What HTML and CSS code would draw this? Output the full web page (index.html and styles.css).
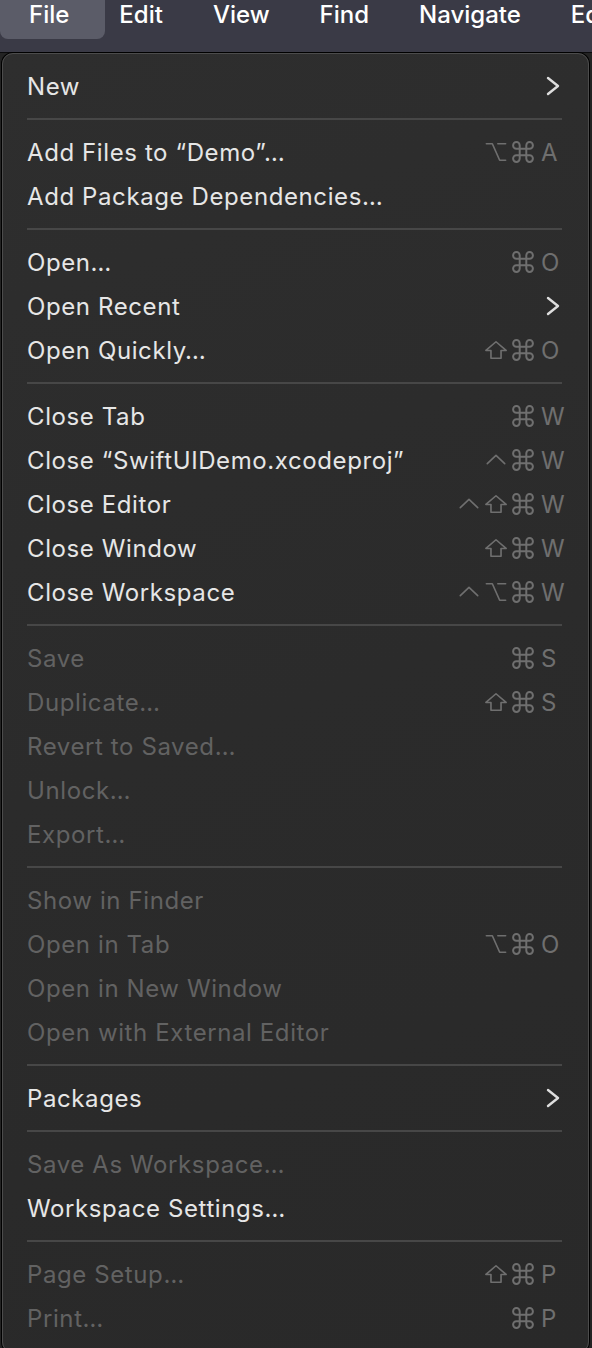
FILE: index.html
```html
<!DOCTYPE html>
<html lang="en">
<head>
<meta charset="utf-8">
<title>Xcode File menu</title>
<link rel="stylesheet" href="styles.css">
</head>
<body>
<svg width="0" height="0" class="defs" aria-hidden="true">
  <defs>
    <symbol id="cmd" viewBox="2 2 20 20"><path d="M15 6v12a3 3 0 1 0 3-3H6a3 3 0 1 0 3 3V6a3 3 0 1 0-3 3h12a3 3 0 1 0-3-3"/></symbol>
    <symbol id="shift" viewBox="0 0 24 24"><path d="M12 3 L23 12.5 H17.5 V21 H6.5 V12.5 H1 Z"/></symbol>
    <symbol id="ctrl" viewBox="0 0 24 24"><path d="M2.5 16 L12 7 L21.5 16"/></symbol>
    <symbol id="opt" viewBox="0 0 24 24"><path d="M1.5 3 H8 L16 21 H22.5 M14 3 H22.5"/></symbol>
    <symbol id="chev" viewBox="0 0 16 20"><path d="M2 2 L12 10 L2 18"/></symbol>
  </defs>
</svg>

<header class="menubar">
  <div class="mb-item active">File</div>
  <div class="mb-item">Edit</div>
  <div class="mb-item">View</div>
  <div class="mb-item">Find</div>
  <div class="mb-item">Navigate</div>
  <div class="mb-item">Editor</div>
</header>

<nav class="menu">
  <div class="item"><span class="label">New</span><svg class="chev"><use href="#chev"/></svg></div>
  <div class="sep"></div>
  <div class="item"><span class="label">Add Files to “Demo”…</span>
    <span class="keys"><span class="k"></span><svg class="k"><use href="#opt"/></svg><svg class="k"><use href="#cmd"/></svg><span class="key">A</span></span></div>
  <div class="item"><span class="label">Add Package Dependencies…</span></div>
  <div class="sep"></div>
  <div class="item"><span class="label">Open…</span>
    <span class="keys"><span class="k"></span><span class="k"></span><svg class="k"><use href="#cmd"/></svg><span class="key">O</span></span></div>
  <div class="item"><span class="label">Open Recent</span><svg class="chev"><use href="#chev"/></svg></div>
  <div class="item"><span class="label">Open Quickly…</span>
    <span class="keys"><span class="k"></span><svg class="k"><use href="#shift"/></svg><svg class="k"><use href="#cmd"/></svg><span class="key">O</span></span></div>
  <div class="sep"></div>
  <div class="item"><span class="label">Close Tab</span>
    <span class="keys"><span class="k"></span><span class="k"></span><svg class="k"><use href="#cmd"/></svg><span class="key">W</span></span></div>
  <div class="item"><span class="label">Close “SwiftUIDemo.xcodeproj”</span>
    <span class="keys"><span class="k"></span><svg class="k"><use href="#ctrl"/></svg><svg class="k"><use href="#cmd"/></svg><span class="key">W</span></span></div>
  <div class="item"><span class="label">Close Editor</span>
    <span class="keys"><svg class="k"><use href="#ctrl"/></svg><svg class="k"><use href="#shift"/></svg><svg class="k"><use href="#cmd"/></svg><span class="key">W</span></span></div>
  <div class="item"><span class="label">Close Window</span>
    <span class="keys"><span class="k"></span><svg class="k"><use href="#shift"/></svg><svg class="k"><use href="#cmd"/></svg><span class="key">W</span></span></div>
  <div class="item"><span class="label">Close Workspace</span>
    <span class="keys"><svg class="k"><use href="#ctrl"/></svg><svg class="k"><use href="#opt"/></svg><svg class="k"><use href="#cmd"/></svg><span class="key">W</span></span></div>
  <div class="sep"></div>
  <div class="item off"><span class="label">Save</span>
    <span class="keys"><span class="k"></span><span class="k"></span><svg class="k"><use href="#cmd"/></svg><span class="key">S</span></span></div>
  <div class="item off"><span class="label">Duplicate…</span>
    <span class="keys"><span class="k"></span><svg class="k"><use href="#shift"/></svg><svg class="k"><use href="#cmd"/></svg><span class="key">S</span></span></div>
  <div class="item off"><span class="label">Revert to Saved…</span></div>
  <div class="item off"><span class="label">Unlock…</span></div>
  <div class="item off"><span class="label">Export…</span></div>
  <div class="sep"></div>
  <div class="item off"><span class="label">Show in Finder</span></div>
  <div class="item off"><span class="label">Open in Tab</span>
    <span class="keys"><span class="k"></span><svg class="k"><use href="#opt"/></svg><svg class="k"><use href="#cmd"/></svg><span class="key">O</span></span></div>
  <div class="item off"><span class="label">Open in New Window</span></div>
  <div class="item off"><span class="label">Open with External Editor</span></div>
  <div class="sep"></div>
  <div class="item"><span class="label">Packages</span><svg class="chev"><use href="#chev"/></svg></div>
  <div class="sep"></div>
  <div class="item off"><span class="label">Save As Workspace…</span></div>
  <div class="item"><span class="label">Workspace Settings…</span></div>
  <div class="sep"></div>
  <div class="item off"><span class="label">Page Setup…</span>
    <span class="keys"><span class="k"></span><svg class="k"><use href="#shift"/></svg><svg class="k"><use href="#cmd"/></svg><span class="key">P</span></span></div>
  <div class="item off"><span class="label">Print…</span>
    <span class="keys"><span class="k"></span><span class="k"></span><svg class="k"><use href="#cmd"/></svg><span class="key">P</span></span></div>
</nav>
</body>
</html>
```

FILE: styles.css
```css
* { box-sizing: border-box; }

html, body {
  margin: 0;
  padding: 0;
  background: #232323;
  overflow: hidden;
}

body {
  font-family: Inter, "Liberation Sans", sans-serif;
  width: 592px;
  height: 1348px;
}

.defs {
  position: absolute;
  width: 0;
  height: 0;
}

.menubar {
  height: 53px;
  background: #3a3a46;
  border-bottom: 1px solid #0b0b0d;
  display: flex;
  align-items: flex-start;
  gap: 50px;
  padding-left: 29px;
  white-space: nowrap;
  overflow: hidden;
}

.mb-item {
  color: #ffffff;
  font-size: 24px;
  font-weight: 500;
  line-height: 30px;
  position: relative;
  z-index: 0;
}

.mb-item.active::before {
  content: "";
  position: absolute;
  left: -29px;
  right: -36px;
  top: -10px;
  height: 49px;
  background: #5b5c68;
  border-radius: 8px;
  z-index: -1;
}

.menu {
  margin: 0 3px 0 2px;
  height: 1300px;
  background: linear-gradient(160deg, #2e2e2e 0%, #2b2b2b 50%, #292929 100%);
  border: 1px solid #4c4c4c;
  border-radius: 11px;
  box-shadow: 0 0 0 1px #000;
  padding: 10px 0 0 0;
}

.item {
  height: 44px;
  display: flex;
  align-items: center;
  padding: 0 26px 0 24px;
  color: #e6e6e6;
  font-size: 24px;
  font-weight: 400;
  white-space: nowrap;
}

.item.off { color: #626262; }

.label {
  flex: 0 0 auto;
  letter-spacing: 0.6px;
}

.chev {
  margin-left: auto;
  width: 16px;
  height: 20px;
  fill: none;
  stroke: #dedede;
  stroke-width: 2.4;
  stroke-linecap: round;
  stroke-linejoin: round;
}

.keys {
  margin-left: auto;
  display: grid;
  grid-template-columns: 26px 27px 28px 25px;
  align-items: center;
  justify-items: center;
  color: #6f6f6f;
}

.k {
  width: 22px;
  height: 22px;
  fill: none;
  stroke: #6f6f6f;
  stroke-width: 1.8;
  stroke-linecap: round;
  stroke-linejoin: round;
}

span.k { display: block; }

.key {
  justify-self: start;
  padding-left: 4px;
  font-size: 24px;
  color: #6f6f6f;
}

.sep {
  height: 22px;
  display: flex;
  align-items: center;
  padding: 0 26px 0 24px;
}

.sep::before {
  content: "";
  display: block;
  width: 100%;
  height: 2px;
  background: #474747;
}
```
